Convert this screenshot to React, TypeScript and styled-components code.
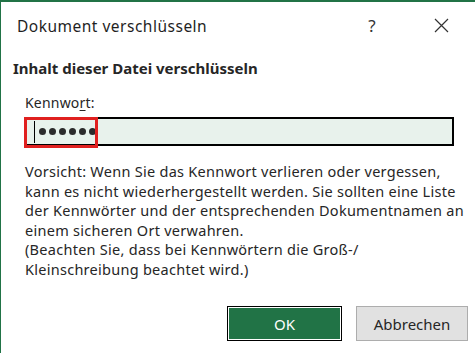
import React from "react";
import styled, { createGlobalStyle } from "styled-components";

const GlobalStyle = createGlobalStyle`
  html, body {
    margin: 0;
    padding: 0;
    background: #ffffff;
  }
  body {
    font-family: "Noto Sans", "Open Sans", "Liberation Sans", sans-serif;
    color: #262626;
  }
`;

export default function App() {
  return (
    <>
      <GlobalStyle />
      <Dialog>
        <TitleBar>
          <Title>Dokument verschlüsseln</Title>
          <TitleButtons>
            <HelpButton>?</HelpButton>
            <CloseButton aria-label="Schließen">
              <svg width="15" height="15" viewBox="0 0 15 15">
                <path d="M1 1 L14 14 M14 1 L1 14" stroke="#333" strokeWidth="1.2" fill="none" />
              </svg>
            </CloseButton>
          </TitleButtons>
        </TitleBar>

        <Body>
          <Heading>Inhalt dieser Datei verschlüsseln</Heading>

          <Field>
            <Label>
              Kennwo<u>r</u>t:
            </Label>
            <PasswordBox>
              <Caret />
              {Array.from({ length: 6 }).map((_, i) => (
                <Dot key={i} />
              ))}
              <Highlight />
            </PasswordBox>
          </Field>

          <Note>
            Vorsicht: Wenn Sie das Kennwort verlieren oder vergessen, kann es
            nicht wiederhergestellt werden. Sie sollten eine Liste der
            Kennwörter und der entsprechenden Dokumentnamen an einem sicheren
            Ort verwahren.
            <br />
            (Beachten Sie, dass bei Kennwörtern die Groß-/ Kleinschreibung
            beachtet wird.)
          </Note>

          <ButtonRow>
            <OkButton>OK</OkButton>
            <CancelButton>Abbrechen</CancelButton>
          </ButtonRow>
        </Body>
      </Dialog>
    </>
  );
}

const Dialog = styled.div`
  box-sizing: border-box;
  width: 475px;
  height: 353px;
  border-top: 2px solid #217346;
  border-left: 1px solid #217346;
  background: #fff;
  display: flex;
  flex-direction: column;
`;

const TitleBar = styled.div`
  height: 46px;
  display: flex;
  align-items: center;
  justify-content: space-between;
  padding: 0 0 0 16px;
`;

const Title = styled.div`
  font-size: 15.5px;
  letter-spacing: 0.5px;
  color: #1f1f1f;
  margin-top: 2px;
`;

const TitleButtons = styled.div`
  display: flex;
  align-items: center;
  height: 100%;
`;

const HelpButton = styled.div`
  width: 64px;
  text-align: center;
  font-size: 17px;
  color: #333;
  margin-right: 9px;
`;

const CloseButton = styled.div`
  width: 56px;
  display: flex;
  justify-content: center;
  padding-right: 6px;
`;

const Body = styled.div`
  padding: 0 0 0 10px;
  display: flex;
  flex-direction: column;
`;

const Heading = styled.div`
  font-weight: 700;
  font-size: 15px;
  color: #262626;
  margin-top: 10px;
  padding-left: 2px;
`;

const Field = styled.div`
  margin-top: 15px;
  padding-left: 14px;
`;

const Label = styled.div`
  font-size: 14px;
  letter-spacing: 0.2px;
  color: #262626;
  u {
    text-underline-offset: 2px;
  }
`;

const PasswordBox = styled.div`
  position: relative;
  box-sizing: border-box;
  margin-top: 5px;
  width: 429px;
  height: 29px;
  border: 2px solid #000;
  background: #e8f2ec;
  display: flex;
  align-items: center;
  gap: 3px;
  padding-left: 7px;
`;

const Caret = styled.span`
  width: 1px;
  height: 22px;
  background: #000;
  margin-right: 1px;
`;

const Dot = styled.span`
  width: 7px;
  height: 7px;
  border-radius: 50%;
  background: #2b2b2b;
`;

const Highlight = styled.span`
  position: absolute;
  left: -3px;
  top: -2px;
  width: 68px;
  height: 25px;
  border: 3px solid #e0201f;
`;

const Note = styled.p`
  margin: 16px 0 0 14px;
  font-size: 14.5px;
  letter-spacing: 0.27px;
  line-height: 19.5px;
  color: #262626;
  width: 440px;
`;

const ButtonRow = styled.div`
  display: flex;
  justify-content: flex-end;
  gap: 14px;
  margin-top: 27px;
  padding-right: 7px;
`;

const BaseButton = styled.button`
  box-sizing: border-box;
  height: 35px;
  font-family: inherit;
  font-size: 15px;
  cursor: pointer;
`;

const OkButton = styled(BaseButton)`
  width: 115px;
  background: #217346;
  color: #fff;
  border: 1px solid #000;
  box-shadow: inset 0 0 0 1px #fff;
`;

const CancelButton = styled(BaseButton)`
  width: 112px;
  background: #e1e1e1;
  color: #262626;
  border: 1px solid #adadad;
`;
